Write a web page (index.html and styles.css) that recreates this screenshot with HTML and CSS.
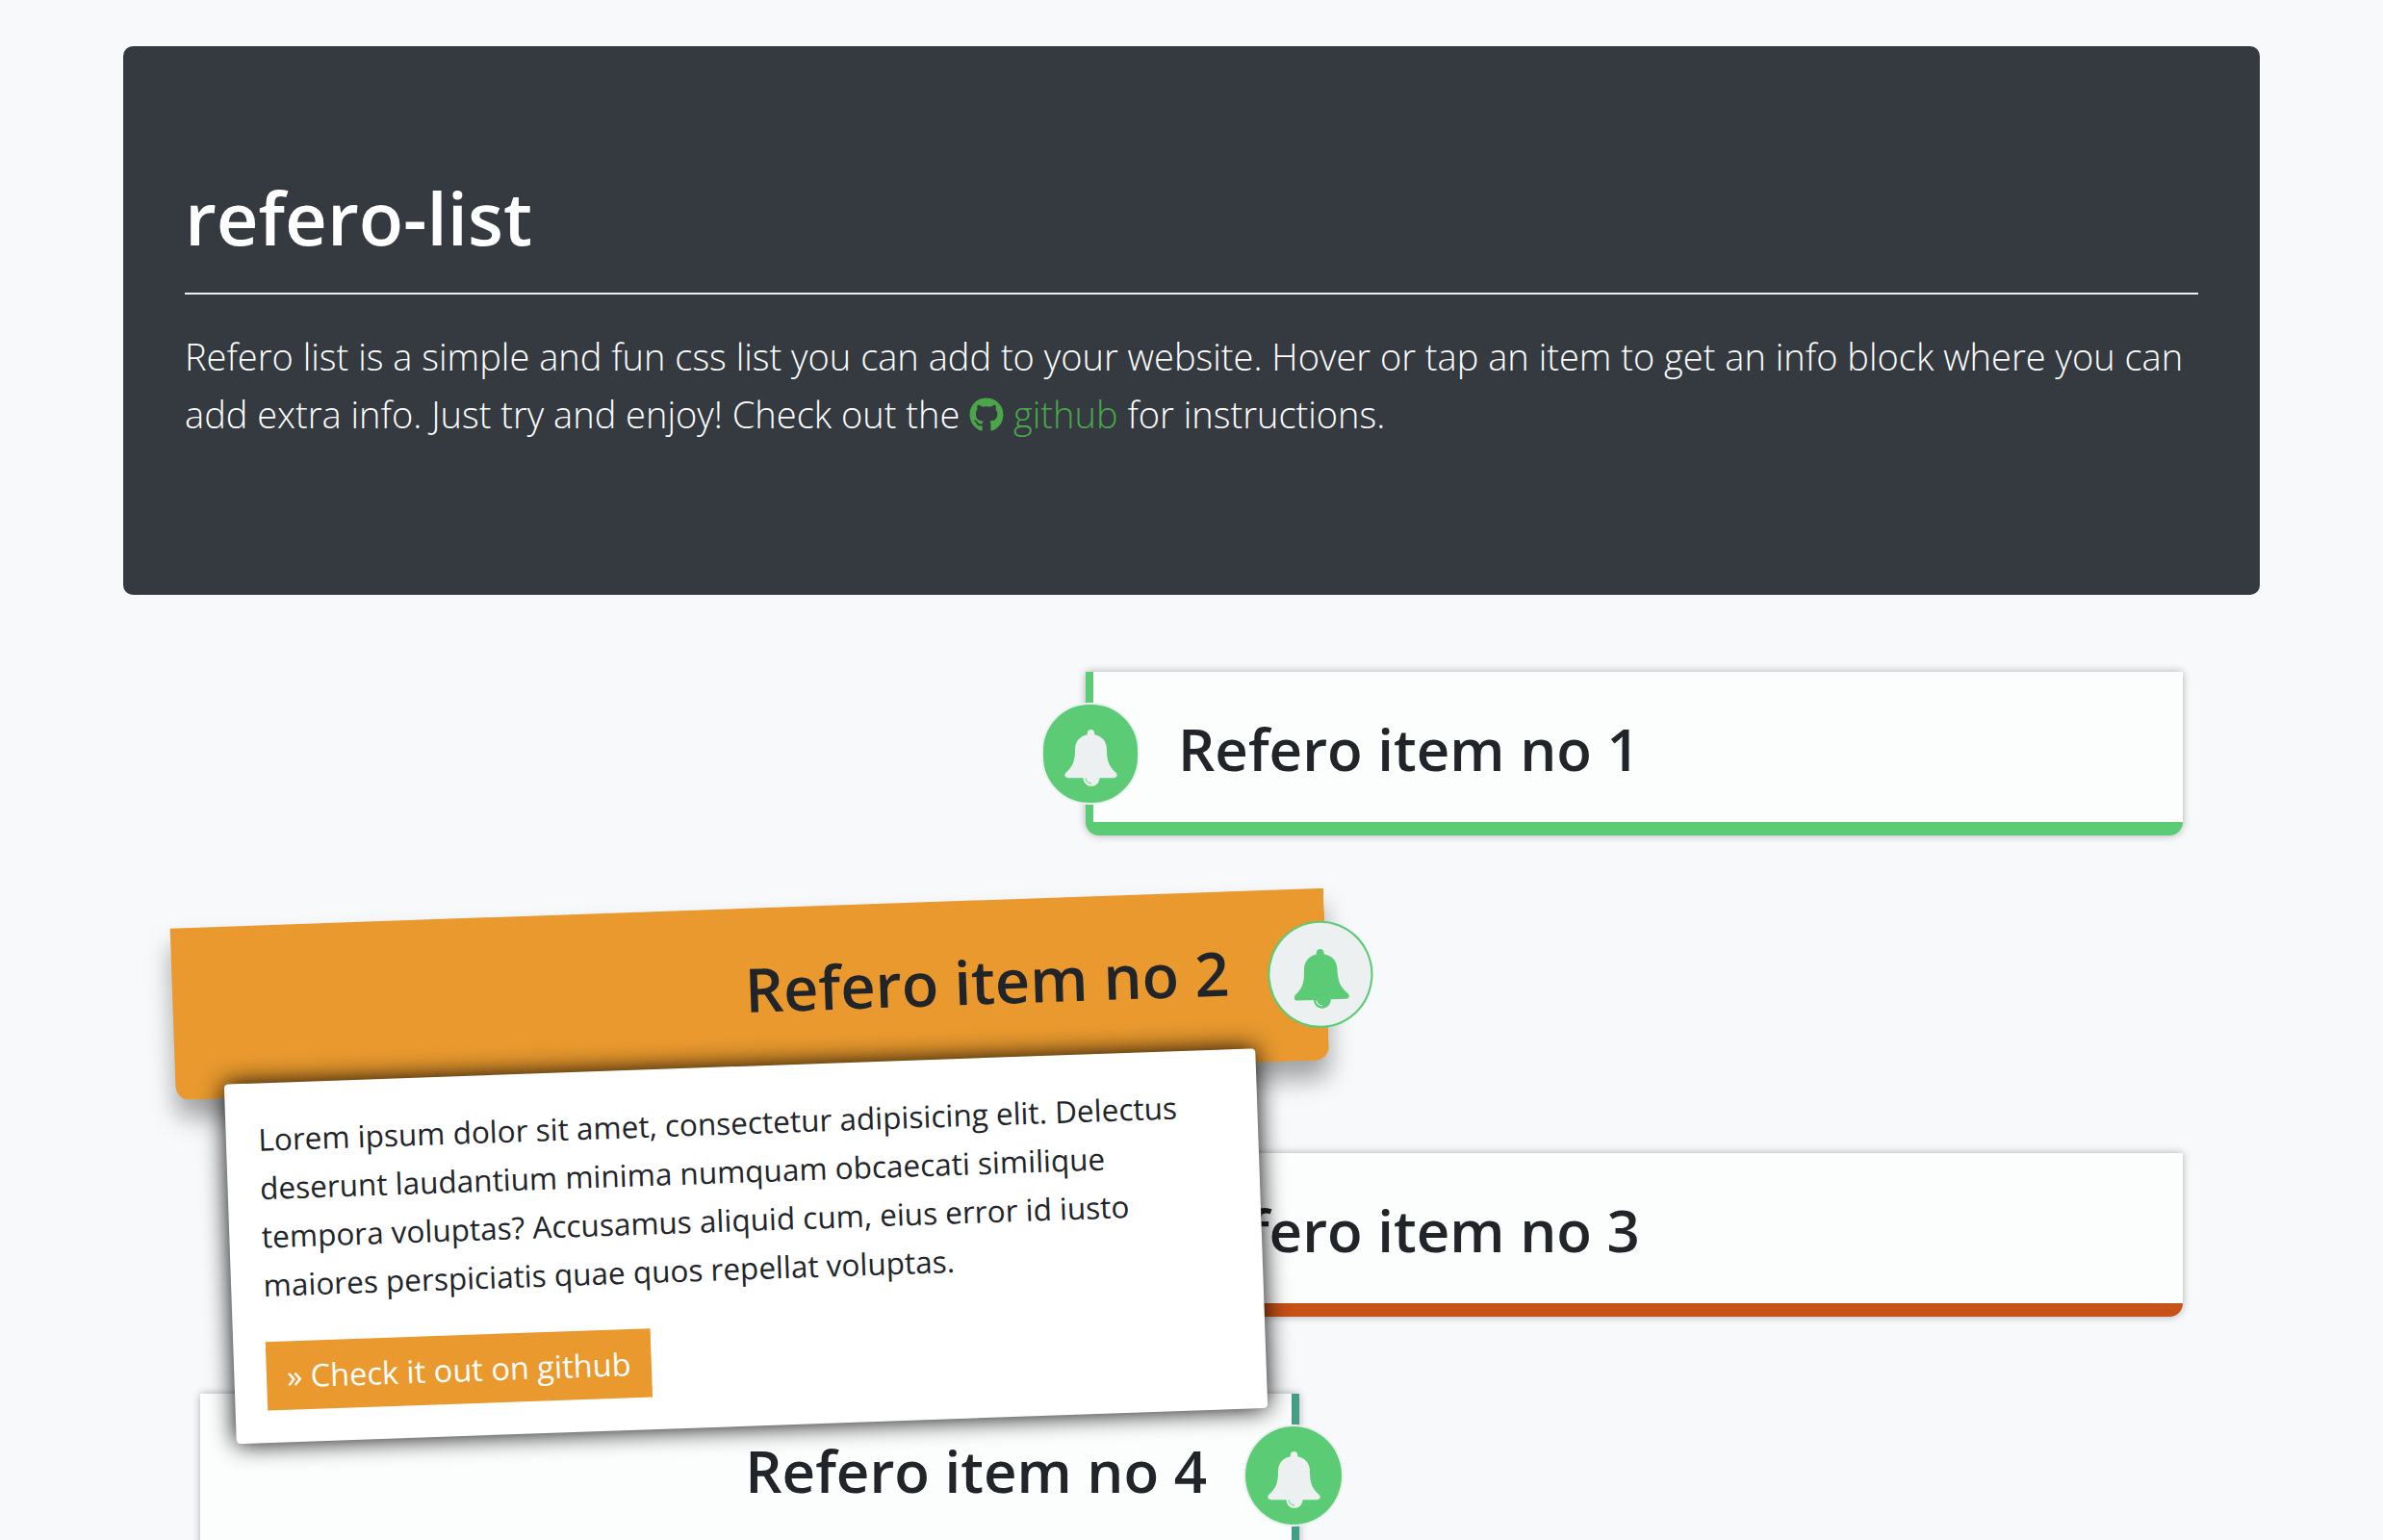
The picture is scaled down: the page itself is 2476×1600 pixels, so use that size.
FILE: index.html
```html
<!DOCTYPE html>
<html lang="en">
<head>
<meta charset="utf-8">
<title>refero-list</title>
<link rel="stylesheet" href="styles.css">
</head>
<body>
<svg class="sprite" aria-hidden="true">
  <symbol id="bell" viewBox="0 0 56 60">
    <path d="M28 0c-2.200 0-3.800 1.600-3.800 3.800v1.400C16.800 6.600 11.500 12 11.300 20c-.2 12-1.500 18-9.500 25.200C-.9 47.700.300 51 3.500 51h16.300c.3 5 3.700 8.800 8.700 8.800s8.400-3.800 8.700-8.800h15.300c3.200 0 4.400-3.300 1.700-5.800C46.200 38 44.900 32 44.700 20 44.500 12 39.200 6.600 31.800 5.200V3.800C31.800 1.600 30.200 0 28 0z" fill="currentColor"/>
    <path d="M22.500 51.500c.3 3 2.500 5.300 6 5.500" fill="none" stroke="var(--disc)" stroke-width="1"/>
  </symbol>
</svg>
<main class="container">
  <header class="jumbotron">
    <h1 class="jumbotron-title">refero-list</h1>
    <hr class="jumbotron-rule">
    <p class="lead">Refero list is a simple and fun css list you can add to your website. Hover or tap an item to get an info block where you can add extra info. Just try and enjoy! Check out the <a class="lead-link" href="#"><svg class="github" viewBox="0 0 496 512" aria-hidden="true"><path fill="currentColor" d="M165.900 397.400c0 2-2.300 3.600-5.200 3.600-3.300.3-5.600-1.300-5.600-3.600 0-2 2.300-3.600 5.200-3.600 3-.3 5.600 1.300 5.600 3.600zm-31.100-4.500c-.7 2 1.300 4.300 4.300 4.900 2.600 1 5.600 0 6.200-2s-1.300-4.300-4.300-5.200c-2.600-.7-5.500.3-6.200 2.300zm44.200-1.700c-2.900.7-4.900 2.600-4.600 4.900.3 2 2.900 3.300 5.900 2.600 2.900-.7 4.900-2.600 4.600-4.600-.3-1.900-3-3.200-5.900-2.900zM244.800 8C106.100 8 0 113.300 0 252c0 110.900 69.800 205.800 169.500 239.200 12.800 2.300 17.300-5.600 17.300-12.100 0-6.200-.3-40.400-.3-61.400 0 0-70 15-84.700-29.800 0 0-11.400-29.100-27.800-36.600 0 0-22.900-15.700 1.600-15.400 0 0 24.900 2 38.600 25.800 21.900 38.600 58.600 27.500 72.900 20.900 2.300-16 8.800-27.100 16-33.700-55.900-6.200-112.300-14.300-112.300-110.500 0-27.500 7.600-41.300 23.600-58.900-2.600-6.500-11.100-33.300 2.600-67.900 20.900-6.500 69 27 69 27 20-5.600 41.500-8.500 62.800-8.500s42.800 2.900 62.800 8.500c0 0 48.100-33.600 69-27 13.700 34.700 5.200 61.400 2.600 67.900 16 17.700 25.800 31.500 25.800 58.900 0 96.500-58.900 104.200-114.800 110.500 9.200 7.900 17 22.900 17 46.400 0 33.700-.3 75.400-.3 83.600 0 6.500 4.600 14.400 17.300 12.100C428.200 457.800 496 362.900 496 252 496 113.300 383.500 8 244.800 8zM97.200 352.900c-1.300 1-1 3.300.7 5.200 1.600 1.600 3.900 2.300 5.200 1 1.300-1 1-3.300-.7-5.200-1.600-1.600-3.900-2.300-5.200-1z"/></svg> github</a> for instructions.</p>
  </header>
  <ul class="refero-list">
    <li class="item item-end item-green">
      <h2 class="item-title">Refero item no 1</h2>
      <span class="badge"><svg class="bell"><use href="#bell"/></svg></span>
    </li>
    <li class="item item-start item-orange is-active">
      <h2 class="item-title">Refero item no 2</h2>
      <span class="badge"><svg class="bell"><use href="#bell"/></svg></span>
      <div class="info">
        <p class="info-text">Lorem ipsum dolor sit amet, consectetur adipisicing elit. Delectus deserunt laudantium minima numquam obcaecati similique tempora voluptas? Accusamus aliquid cum, eius error id iusto maiores perspiciatis quae quos repellat voluptas.</p>
        <a class="info-link" href="#">» Check it out on github</a>
      </div>
    </li>
    <li class="item item-end item-rust">
      <h2 class="item-title">Refero item no 3</h2>
      <span class="badge"><svg class="bell"><use href="#bell"/></svg></span>
    </li>
    <li class="item item-start item-teal">
      <h2 class="item-title">Refero item no 4</h2>
      <span class="badge"><svg class="bell"><use href="#bell"/></svg></span>
    </li>
  </ul>
</main>
</body>
</html>
```
FILE: styles.css
```css
* {
  box-sizing: border-box;
}

body {
  margin: 0;
  background: #f8f9fb;
  color: #212529;
  font-family: "Segoe UI", "Open Sans", "Noto Sans", sans-serif;
  font-size: 30px;
  line-height: 48px;
}

.sprite {
  position: absolute;
  width: 0;
  height: 0;
}

.container {
  max-width: 2220px;
  margin: 0 auto;
  padding-top: 48px;
}

.jumbotron {
  padding: 128px 64px;
  border-radius: 10px;
  background: #343a40;
  color: #fff;
}

.jumbotron-title {
  margin: 0;
  font-size: 76px;
  font-weight: 600;
  line-height: 100px;
}

.jumbotron-rule {
  margin: 28px 0 34px;
  border: 0;
  border-top: 2px solid #ecf0f1;
}

.lead {
  margin: 0 0 30px;
  font-size: 38px;
  font-weight: 300;
  line-height: 60px;
}

.lead-link {
  color: #4ba64b;
  text-decoration: none;
}

.github {
  width: 36px;
  height: 36px;
  vertical-align: -4px;
}

.refero-list {
  display: flex;
  flex-direction: column;
  gap: 80px;
  margin: 80px 0;
  padding: 0 80px;
  list-style: none;
}

.item {
  --accent: #5bcc75;
  --disc: #5bcc75;
  position: relative;
  width: 1140px;
  max-width: 100%;
  padding: 42px 88px 38px;
  border-bottom: 14px solid var(--accent);
  border-radius: 0 0 14px 14px;
  background: #fcfefd;
  box-shadow: 0 0 8px rgba(0, 0, 0, 0.3);
}

.item-end {
  align-self: flex-end;
  border-left: 8px solid var(--accent);
}

.item-start {
  align-self: flex-start;
  width: 1142px;
  border-right: 8px solid var(--accent);
  text-align: right;
}

.item-orange { --accent: #e9992e; }
.item-rust { --accent: #c65217; }
.item-teal { --accent: #439f87; }

.item-title {
  margin: 0;
  font-size: 60px;
  font-weight: 600;
  line-height: 76px;
}

.badge {
  position: absolute;
  top: 32px;
  display: grid;
  place-items: center;
  width: 104px;
  height: 106px;
  padding-top: 8px;
  border: 2px solid #ecf0f1;
  border-radius: 50%;
  background: var(--disc);
  color: #ecf0f1;
}

.item-end .badge {
  left: -54px;
  width: 102px;
  border-radius: 50px;
}

.item-start .badge {
  right: -54px;
}

.bell {
  width: 55px;
  height: 59px;
}

.is-active {
  --disc: #ecf0f1;
  z-index: 1;
  background: var(--accent);
  box-shadow: 0 18px 24px rgba(0, 0, 0, 0.35);
  transform: rotate(-2deg) scale(1.05);
}

.is-active .badge {
  border-color: #5bcc75;
  color: #5bcc75;
}

.info {
  position: absolute;
  top: 100%;
  left: 48px;
  width: 90%;
  padding: 32px;
  border-radius: 4px;
  background: #fff;
  box-shadow: 0 0 24px #000;
  text-align: left;
}

.info-text {
  margin: 0 0 32px;
}

.info-link {
  display: inline-block;
  padding: 10px 20px;
  background: #e9992e;
  color: #fff;
  font-size: 31px;
  text-decoration: none;
  vertical-align: top;
}
```
